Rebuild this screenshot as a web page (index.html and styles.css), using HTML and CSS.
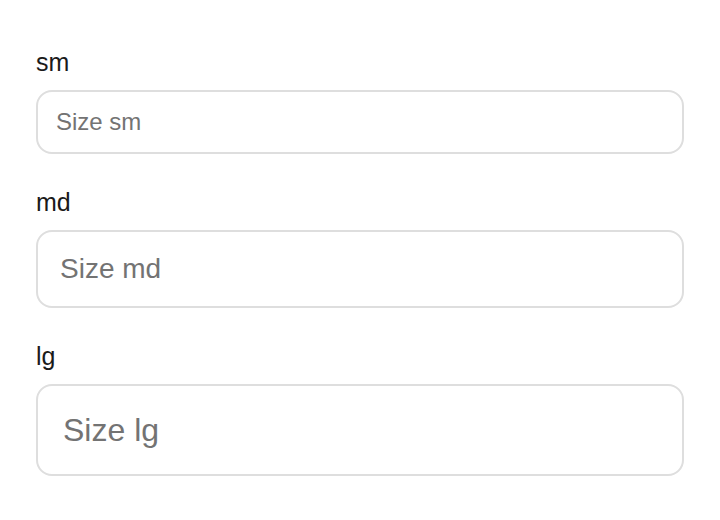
FILE: index.html
```html
<!DOCTYPE html>
<html lang="en">
<head>
    <meta charset="UTF-8">
    <meta name="viewport" content="width=device-width, initial-scale=1">
    <title>Input sizes</title>
    <link rel="stylesheet" href="styles.css">
</head>
<body>
    <div class="container">
        <div class="field">
            <label for="size-sm">sm</label>
            <input type="text" id="size-sm" class="input input-sm" placeholder="Size sm">
        </div>

        <div class="field">
            <label for="size-md">md</label>
            <input type="text" id="size-md" class="input input-md" placeholder="Size md">
        </div>

        <div class="field">
            <label for="size-lg">lg</label>
            <input type="text" id="size-lg" class="input input-lg" placeholder="Size lg">
        </div>
    </div>
</body>
</html>
```

FILE: styles.css
```css
body {
    font-family: "Liberation Sans", Arial, sans-serif;
    margin: 0;
    padding: 46px 36px 0;
    background: #fff;
    color: #1a1a1a;
}
.container {
    display: flex;
    flex-direction: column;
    gap: 32px;
}
.field {
    display: flex;
    flex-direction: column;
}
.field label {
    font-size: 25px;
    line-height: 32px;
    margin-bottom: 12px;
}
.input {
    box-sizing: border-box;
    width: 100%;
    margin: 0;
    border: 2px solid #dedede;
    border-radius: 16px;
    background: #fff;
    font-family: inherit;
    color: #1a1a1a;
    outline: none;
}
.input::placeholder {
    color: #737373;
    opacity: 1;
}
.input-sm {
    height: 64px;
    padding: 0 18px;
    font-size: 24px;
}
.input-md {
    height: 78px;
    padding: 0 22px;
    font-size: 28px;
}
.input-lg {
    height: 92px;
    padding: 0 25px;
    font-size: 32px;
}
```
